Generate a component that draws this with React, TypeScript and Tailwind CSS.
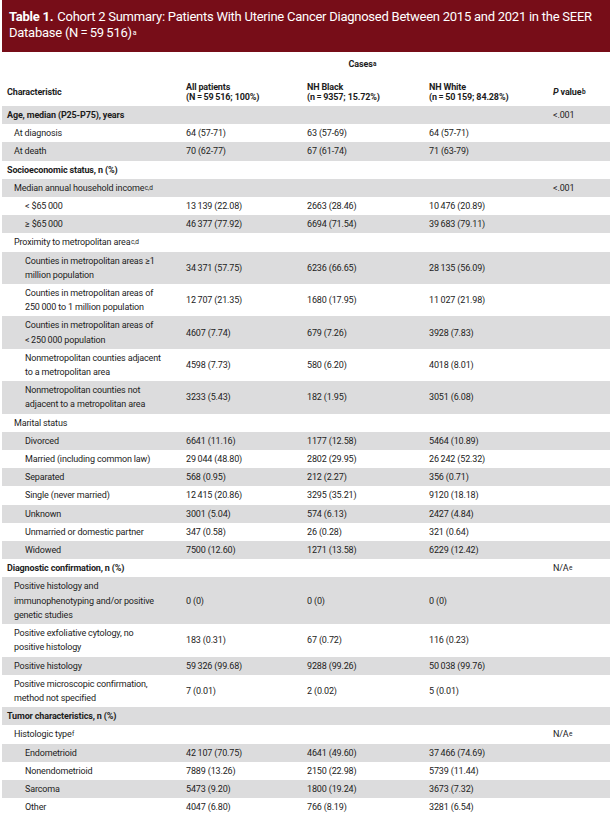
import React from "react";

const T = "\u2009";

type Row = {
  label: React.ReactNode;
  level: 0 | 1 | 2;
  bold?: boolean;
  vals?: [string, string, string];
  p?: React.ReactNode;
};

const Sup = ({ children }: { children: React.ReactNode }) => (
  <sup className="text-[6.5px] leading-none relative -top-[1px] ml-[0.5px]">{children}</sup>
);

const NA = (
  <span>
    N/A<Sup>e</Sup>
  </span>
);

const rows: Row[] = [
  { label: "Age, median (P25-P75), years", level: 0, bold: true, p: "<.001" },
  { label: "At diagnosis", level: 1, vals: ["64 (57-71)", "63 (57-69)", "64 (57-71)"] },
  { label: "At death", level: 1, vals: ["70 (62-77)", "67 (61-74)", "71 (63-79)"] },
  { label: "Socioeconomic status, n (%)", level: 0, bold: true },
  {
    label: (
      <span>
        Median annual household income<Sup>c,d</Sup>
      </span>
    ),
    level: 1,
    p: "<.001",
  },
  { label: `< $65${T}000`, level: 2, vals: [`13${T}139 (22.08)`, "2663 (28.46)", `10${T}476 (20.89)`] },
  { label: `≥ $65${T}000`, level: 2, vals: [`46${T}377 (77.92)`, "6694 (71.54)", `39${T}683 (79.11)`] },
  {
    label: (
      <span>
        Proximity to metropolitan area<Sup>c,d</Sup>
      </span>
    ),
    level: 1,
  },
  {
    label: (
      <>
        Counties in metropolitan areas ≥1
        <br />
        million population
      </>
    ),
    level: 2,
    vals: [`34${T}371 (57.75)`, "6236 (66.65)", `28${T}135 (56.09)`],
  },
  {
    label: (
      <>
        Counties in metropolitan areas of
        <br />
        250{T}000 to 1 million population
      </>
    ),
    level: 2,
    vals: [`12${T}707 (21.35)`, "1680 (17.95)", `11${T}027 (21.98)`],
  },
  {
    label: (
      <>
        Counties in metropolitan areas of
        <br />
        {`<${T}250${T}000 population`}
      </>
    ),
    level: 2,
    vals: ["4607 (7.74)", "679 (7.26)", "3928 (7.83)"],
  },
  {
    label: (
      <>
        Nonmetropolitan counties adjacent
        <br />
        to a metropolitan area
      </>
    ),
    level: 2,
    vals: ["4598 (7.73)", "580 (6.20)", "4018 (8.01)"],
  },
  {
    label: (
      <>
        Nonmetropolitan counties not
        <br />
        adjacent to a metropolitan area
      </>
    ),
    level: 2,
    vals: ["3233 (5.43)", "182 (1.95)", "3051 (6.08)"],
  },
  { label: "Marital status", level: 1 },
  { label: "Divorced", level: 2, vals: ["6641 (11.16)", "1177 (12.58)", "5464 (10.89)"] },
  { label: "Married (including common law)", level: 2, vals: [`29${T}044 (48.80)`, "2802 (29.95)", `26${T}242 (52.32)`] },
  { label: "Separated", level: 2, vals: ["568 (0.95)", "212 (2.27)", "356 (0.71)"] },
  { label: "Single (never married)", level: 2, vals: [`12${T}415 (20.86)`, "3295 (35.21)", "9120 (18.18)"] },
  { label: "Unknown", level: 2, vals: ["3001 (5.04)", "574 (6.13)", "2427 (4.84)"] },
  { label: "Unmarried or domestic partner", level: 2, vals: ["347 (0.58)", "26 (0.28)", "321 (0.64)"] },
  { label: "Widowed", level: 2, vals: ["7500 (12.60)", "1271 (13.58)", "6229 (12.42)"] },
  { label: "Diagnostic confirmation, n (%)", level: 0, bold: true, p: NA },
  {
    label: (
      <>
        Positive histology and
        <br />
        immunophenotyping and/or positive
        <br />
        genetic studies
      </>
    ),
    level: 1,
    vals: ["0 (0)", "0 (0)", "0 (0)"],
  },
  {
    label: (
      <>
        Positive exfoliative cytology, no
        <br />
        positive histology
      </>
    ),
    level: 1,
    vals: ["183 (0.31)", "67 (0.72)", "116 (0.23)"],
  },
  { label: "Positive histology", level: 1, vals: [`59${T}326 (99.68)`, "9288 (99.26)", `50${T}038 (99.76)`] },
  {
    label: (
      <>
        Positive microscopic confirmation,
        <br />
        method not specified
      </>
    ),
    level: 1,
    vals: ["7 (0.01)", "2 (0.02)", "5 (0.01)"],
  },
  { label: "Tumor characteristics, n (%)", level: 0, bold: true },
  {
    label: (
      <span>
        Histologic type<Sup>f</Sup>
      </span>
    ),
    level: 1,
    p: NA,
  },
  { label: "Endometrioid", level: 2, vals: [`42${T}107 (70.75)`, "4641 (49.60)", `37${T}466 (74.69)`] },
  { label: "Nonendometrioid", level: 2, vals: ["7889 (13.26)", "2150 (22.98)", "5739 (11.44)"] },
  { label: "Sarcoma", level: 2, vals: ["5473 (9.20)", "1800 (19.24)", "3673 (7.32)"] },
  { label: "Other", level: 2, vals: ["4047 (6.80)", "766 (8.19)", "3281 (6.54)"] },
];

const grid = "grid grid-cols-[179px_121px_122px_124px_1fr]";

export default function App() {
  return (
    <div
      className="w-[610px] min-h-[821px] bg-white pl-[2px] text-[#1c1c1c]"
      style={{ fontFamily: "Roboto, 'Liberation Sans', sans-serif" }}
    >
      <div className="h-[52px] bg-[#770d18] pl-[7px] pt-[9px] text-[13px] leading-[16px] tracking-[-0.25px] text-white">
        <span className="font-bold">Table 1.</span>
        <span className="ml-[4px]">
          Cohort 2 Summary: Patients With Uterine Cancer Diagnosed Between 2015 and 2021 in the SEER Database (N{T}={T}
          59{T}516)
        </span>
        <sup className="text-[7px] leading-none relative -top-[2px] ml-[1px]">a</sup>
      </div>

      <div className="text-[9px] tracking-[-0.15px]">
        <div className={`${grid} mt-[6px] h-[14px] items-center font-bold`}>
          <div />
          <div className="col-span-3 text-center pr-[4px]">
            Cases<Sup>a</Sup>
          </div>
          <div />
        </div>

        <div className={`${grid} mt-[10px] pb-[4px] items-center font-bold leading-[10px]`}>
          <div className="pl-[5px]">Characteristic</div>
          <div className="pl-[5px]">
            All patients
            <br />
            (N{T}={T}59{T}516; 100%)
          </div>
          <div className="pl-[5px]">
            NH Black
            <br />
            (n{T}={T}9357; 15.72%)
          </div>
          <div className="pl-[5px]">
            NH White
            <br />
            (n{T}={T}50{T}159; 84.28%)
          </div>
          <div className="pl-[5px]">
            <i>P</i> value<Sup>b</Sup>
          </div>
        </div>

        {rows.map((r, i) => (
          <div
            key={i}
            className={`${grid} items-center py-[2px] leading-[14.2px] ${i % 2 === 0 ? "bg-[#dcdcdd]" : "bg-white"}`}
          >
            <div
              className={`${r.bold ? "font-bold" : ""} ${
                r.level === 0 ? "pl-[5px]" : r.level === 1 ? "pl-[12px]" : "pl-[23px]"
              }`}
            >
              {r.label}
            </div>
            <div className="pl-[5px]">{r.vals?.[0]}</div>
            <div className="pl-[5px]">{r.vals?.[1]}</div>
            <div className="pl-[5px]">{r.vals?.[2]}</div>
            <div className="pl-[5px]">{r.p}</div>
          </div>
        ))}
      </div>
    </div>
  );
}
